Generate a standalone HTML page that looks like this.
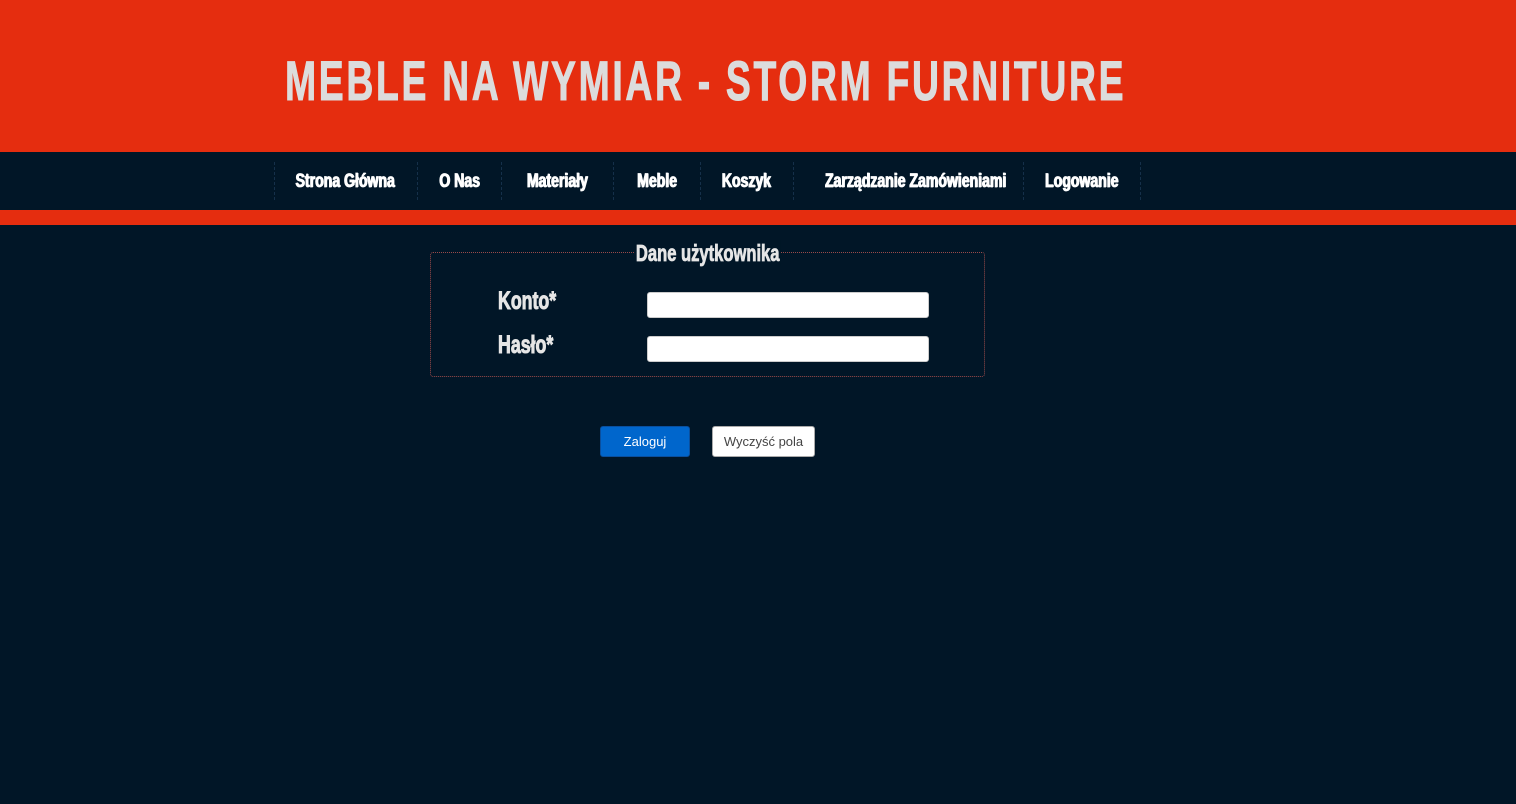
<!DOCTYPE html>
<html><head><meta charset="utf-8"><style>
*{margin:0;padding:0;box-sizing:border-box}
body{width:1516px;height:804px;background:#011627;position:relative;overflow:hidden;font-family:"Liberation Sans",sans-serif}
.hdr{position:absolute;left:0;top:0;width:1516px;height:152px;background:#e52d0f}
.title{position:absolute;left:285px;top:51px;font-weight:bold;font-size:56px;line-height:60px;color:#dcdcdc;letter-spacing:4px;white-space:nowrap;transform-origin:0 0;transform:scaleX(0.667);-webkit-text-stroke:1px #dcdcdc}
.nav{position:absolute;left:0;top:152px;width:1516px;height:58px;background:#011627}
.strip{position:absolute;left:0;top:210px;width:1516px;height:15px;background:#e52d0f}
.sep{position:absolute;top:162px;height:38px;border-left:1px dashed #15304a}
.ni{position:absolute;top:170px;height:24px;text-align:center;color:#fff;font-weight:bold;font-size:19px;line-height:24px;white-space:nowrap;-webkit-text-stroke:0.8px #fff;text-shadow:1px 0 0 #fff}
.ni span{display:inline-block;transform:scaleX(0.74)}
fieldset{position:absolute;left:430px;top:252px;width:555px;height:125px;border:1px dotted #9a4a4a;border-radius:3px}
.legend{position:absolute;left:600px;top:240px;width:215px;text-align:center;color:#e6e6e6;font-weight:bold;font-size:23px;line-height:26px;-webkit-text-stroke:0.8px #e6e6e6}
.legend span{display:inline-block;transform:scaleX(0.72);background:#011627;padding:0 2px}
.lbl{position:absolute;left:498px;color:#e6e6e6;font-weight:bold;font-size:25px;line-height:28px;transform-origin:0 0;transform:scaleX(0.71);-webkit-text-stroke:1px #e6e6e6}
.inp{position:absolute;left:647px;width:282px;height:26px;background:#fff;border:1px solid #ccc;border-radius:3px}
.b1{position:absolute;left:600px;top:426px;width:90px;height:31px;background:#0066cc;border:1px solid #0a4f9e;border-radius:3px;color:#fff;font-size:13px;line-height:29px;text-align:center}
.b2{position:absolute;left:712px;top:426px;width:103px;height:31px;background:#fff;border:1px solid #aaa;border-radius:3px;color:#444;font-size:13px;line-height:29px;text-align:center}
</style></head><body>
<div class="hdr"></div>
<div class="title">MEBLE NA WYMIAR - STORM FURNITURE</div>
<div class="nav"></div>
<div class="strip"></div>
<div class="sep" style="left:274px"></div>
<div class="sep" style="left:417px"></div>
<div class="sep" style="left:501px"></div>
<div class="sep" style="left:613px"></div>
<div class="sep" style="left:700px"></div>
<div class="sep" style="left:793px"></div>
<div class="sep" style="left:1023px"></div>
<div class="sep" style="left:1140px"></div>
<div class="ni" style="left:274px;width:143px"><span>Strona Główna</span></div>
<div class="ni" style="left:417px;width:84px"><span>O Nas</span></div>
<div class="ni" style="left:501px;width:112px"><span>Materiały</span></div>
<div class="ni" style="left:613px;width:87px"><span>Meble</span></div>
<div class="ni" style="left:700px;width:93px"><span>Koszyk</span></div>
<div class="ni" style="left:793px;width:230px"><span>Zarządzanie Zamówieniami</span></div>
<div class="ni" style="left:1023px;width:117px"><span>Logowanie</span></div>
<fieldset></fieldset>
<div class="legend"><span>Dane użytkownika</span></div>
<div class="lbl" style="top:287px">Konto*</div>
<div class="lbl" style="top:331px">Hasło*</div>
<div class="inp" style="top:292px"></div>
<div class="inp" style="top:336px"></div>
<div class="b1">Zaloguj</div>
<div class="b2">Wyczyść pola</div>
</body></html>
